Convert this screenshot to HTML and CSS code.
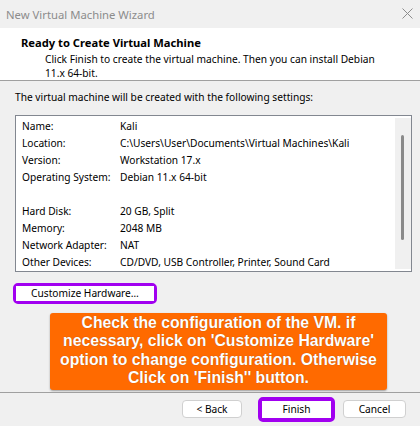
FILE: index.html
```html
<!DOCTYPE html>
<html lang="en">
<head>
    <meta charset="UTF-8">
    <title>New Virtual Machine Wizard</title>
    <link rel="stylesheet" href="styles.css">
</head>
<body>
    <div class="titlebar">
        <span class="title">New Virtual Machine Wizard</span>
        <svg class="close" width="11" height="11" viewBox="0 0 11 11">
            <path d="M0.5 0.5 L10.5 10.5 M10.5 0.5 L0.5 10.5" stroke="#8c8c8c" stroke-width="1" fill="none"/>
        </svg>
    </div>

    <div class="header">
        <h1>Ready to Create Virtual Machine</h1>
        <p>Click Finish to create the virtual machine. Then you can install Debian<br>11.x 64-bit.</p>
    </div>

    <div class="content">
        <p class="intro">The virtual machine will be created with the following settings:</p>

        <div class="listbox">
            <div class="rows">
                <span>Name:</span><span>Kali</span>
                <span>Location:</span><span>C:\Users\User\Documents\Virtual Machines\Kali</span>
                <span>Version:</span><span>Workstation 17.x</span>
                <span>Operating System:</span><span>Debian 11.x 64-bit</span>
                <span class="blank"></span><span class="blank"></span>
                <span>Hard Disk:</span><span>20 GB, Split</span>
                <span>Memory:</span><span>2048 MB</span>
                <span>Network Adapter:</span><span>NAT</span>
                <span>Other Devices:</span><span>CD/DVD, USB Controller, Printer, Sound Card</span>
            </div>
            <div class="scrollbar"><div class="thumb"></div></div>
        </div>

        <div class="highlight customize">
            <button class="btn">Customize Hardware…</button>
        </div>

        <div class="callout">
            Check the configuration of the VM. if<br>
            necessary, click on 'Customize Hardware'<br>
            option to change configuration. Otherwise<br>
            Click on 'Finish'' button.
        </div>
    </div>

    <div class="footer">
        <button class="btn back">&lt; Back</button>
        <div class="highlight finish">
            <button class="btn">Finish</button>
        </div>
        <button class="btn cancel">Cancel</button>
    </div>
</body>
</html>
```
FILE: styles.css
```css
/* Window */
body {
    margin: 0;
    width: 420px;
    height: 426px;
    overflow: hidden;
    background-color: #f0f0f0;
    font-family: 'Segoe UI', 'Noto Sans', sans-serif;
    font-size: 10.2px;
    color: #000000;
}

/* Title bar */
.titlebar {
    height: 28px;
    display: flex;
    align-items: center;
    justify-content: space-between;
    padding: 0 7px 0 6px;
    box-sizing: border-box;
}

.title {
    font-size: 11.3px;
    color: #8c8c8c;
}

.close {
    margin-top: -1px;
}

/* Header */
.header {
    height: 53px;
    box-sizing: border-box;
    background-color: #ffffff;
    border-bottom: 1px solid #a0a0a0;
    padding: 8px 0 0 21px;
}

.header h1 {
    margin: 0;
    font-size: 11.2px;
    line-height: 14px;
    font-weight: 700;
}

.header p {
    margin: 2px 0 0 24px;
    line-height: 14px;
}

/* Content */
.content {
    padding: 0 8px 0 15px;
}

.intro {
    margin: 9px 0 11px;
    line-height: 14px;
}

.listbox {
    height: 157px;
    box-sizing: border-box;
    border: 1px solid #828790;
    background-color: #ffffff;
    display: flex;
}

.rows {
    flex: 1;
    display: grid;
    grid-template-columns: 98px 1fr;
    grid-auto-rows: 17px;
    align-content: start;
    line-height: 17px;
    padding: 2px 0 0 6px;
}

.blank {
    height: 17px;
}

.scrollbar {
    width: 16px;
    margin: 2px 0;
    background-color: #f0f0f0;
    position: relative;
}

.thumb {
    position: absolute;
    left: 6px;
    top: 17px;
    width: 3px;
    height: 105px;
    border-radius: 2px;
    background-color: #8a8a8a;
}

/* Buttons */
.btn {
    font-family: inherit;
    font-size: 10.2px;
    color: #000000;
    background-color: #ffffff;
    border: 1px solid #d0d0d0;
    border-radius: 4px;
    padding: 0;
    height: 18px;
    line-height: 16px;
}

.highlight {
    border: 3px solid #a100f0;
    border-radius: 5px;
    display: flex;
    background-color: #ffffff;
}

.highlight .btn {
    border: none;
    border-radius: 0;
}

.customize {
    width: 138px;
    margin: 11px 0 0 -2px;
}

.customize .btn {
    width: 138px;
    height: 15px;
    line-height: 15px;
}

/* Orange note */
.callout {
    width: 337px;
    height: 77px;
    box-sizing: border-box;
    margin: 9px 0 0 35px;
    padding-top: 1px;
    background-color: #ff6a00;
    border-radius: 3px;
    box-shadow: 0 1px 2px rgba(0, 0, 0, 0.35);
    color: #ffffff;
    font-family: 'Liberation Sans', Arial, sans-serif;
    font-weight: 700;
    font-size: 15.75px;
    line-height: 18.3px;
    text-align: center;
    text-shadow: 0 0 1px rgba(0, 0, 0, 0.35);
}

/* Footer */
.footer {
    margin-top: 2px;
    border-top: 1px solid #a0a0a0;
    height: 33px;
    box-sizing: border-box;
    display: flex;
    align-items: center;
    justify-content: flex-end;
    padding-right: 14px;
}

.back {
    width: 60px;
    margin-right: 16px;
}

.finish {
    border-width: 4px;
    margin-right: 8px;
}

.finish .btn {
    width: 69px;
    height: 17px;
    line-height: 17px;
}

.cancel {
    width: 63px;
}
```
